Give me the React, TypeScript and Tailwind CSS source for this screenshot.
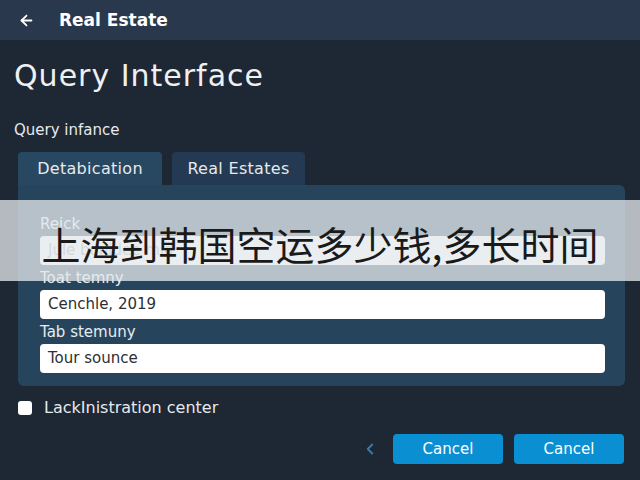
import { ArrowLeft, ChevronLeft } from "lucide-react";

const fields = [
    { label: "Reick", value: "Jule bonidee mid", placeholder: true },
    { label: "Toat temny", value: "Cenchle, 2019", placeholder: false },
    { label: "Tab stemuny", value: "Tour sounce", placeholder: false },
];

export default function App() {
    return (
        <div className="relative w-[640px] h-[480px] overflow-hidden bg-[#1e2734] text-[#e6e9ed] font-['DejaVu_Sans',sans-serif]">
            <div className="h-10 bg-[#2a384d] flex items-center pl-[18px] gap-[24px]">
                <ArrowLeft size={17} strokeWidth={2.5} className="text-white" />
                <span className="text-[17px] font-bold text-white leading-none">Real Estate</span>
            </div>

            <div className="px-[14px]">
                <h1 className="mt-[16px] text-[30px] leading-[40px] tracking-[1px] text-[#eef0f2]">Query Interface</h1>
                <div className="mt-[24px] text-[15px] leading-5">Query infance</div>

                <div className="ml-[4px] mr-[1px] mt-[12px]">
                    <div className="flex gap-[10px]">
                        <div className="w-[144px] h-[33px] rounded-t-[4px] bg-[#284760] flex items-center justify-center text-[16px] tracking-[0.3px]">
                            Detabication
                        </div>
                        <div className="w-[133px] h-[33px] rounded-t-[4px] bg-[#233a52] flex items-center justify-center text-[16px] tracking-[0.3px]">
                            Real Estates
                        </div>
                    </div>
                    <div className="bg-[#27445d] rounded-b-[6px] rounded-tr-[6px] pl-[22px] pr-[20px] pt-[29px] pb-[13px] flex flex-col gap-[3px]">
                        {fields.map((f) => (
                            <div key={f.label} className="flex flex-col gap-[2px]">
                                <div className="text-[15px] leading-5 text-[#e8ecef]">{f.label}</div>
                                <div className="h-[29px] rounded-[4px] bg-white flex items-center px-[8px] text-[15px]">
                                    <span className={f.placeholder ? "text-[#9aa3ab]" : "text-[#2b2f33]"}>{f.value}</span>
                                </div>
                            </div>
                        ))}
                    </div>
                </div>

                <label className="mt-[10px] ml-[4px] flex items-center gap-[12px] text-[16px]">
                    <span className="w-[14px] h-[14px] rounded-[3px] bg-white" />
                    <span>LackInistration center</span>
                </label>

                <div className="mt-[14px] flex items-center justify-end gap-[11px] pr-[2px]">
                    <ChevronLeft size={18} strokeWidth={2.5} className="text-[#3a7aa6] mr-[3px]" />
                    <button className="w-[110px] h-[30px] rounded-[4px] bg-[#0b8fd3] text-white text-[15px]">Cancel</button>
                    <button className="w-[110px] h-[30px] rounded-[4px] bg-[#0b8fd3] text-white text-[15px]">Cancel</button>
                </div>
            </div>

            <div className="absolute left-0 top-[200px] w-full h-[81px] bg-[rgba(228,232,236,0.76)] flex items-center justify-center">
                <span className="text-[39px] leading-none text-[#1a1a1a] font-['Noto_Sans_CJK_SC',sans-serif] translate-y-[3px]">
                    上海到韩国空运多少钱,多长时间
                </span>
            </div>
        </div>
    );
}
